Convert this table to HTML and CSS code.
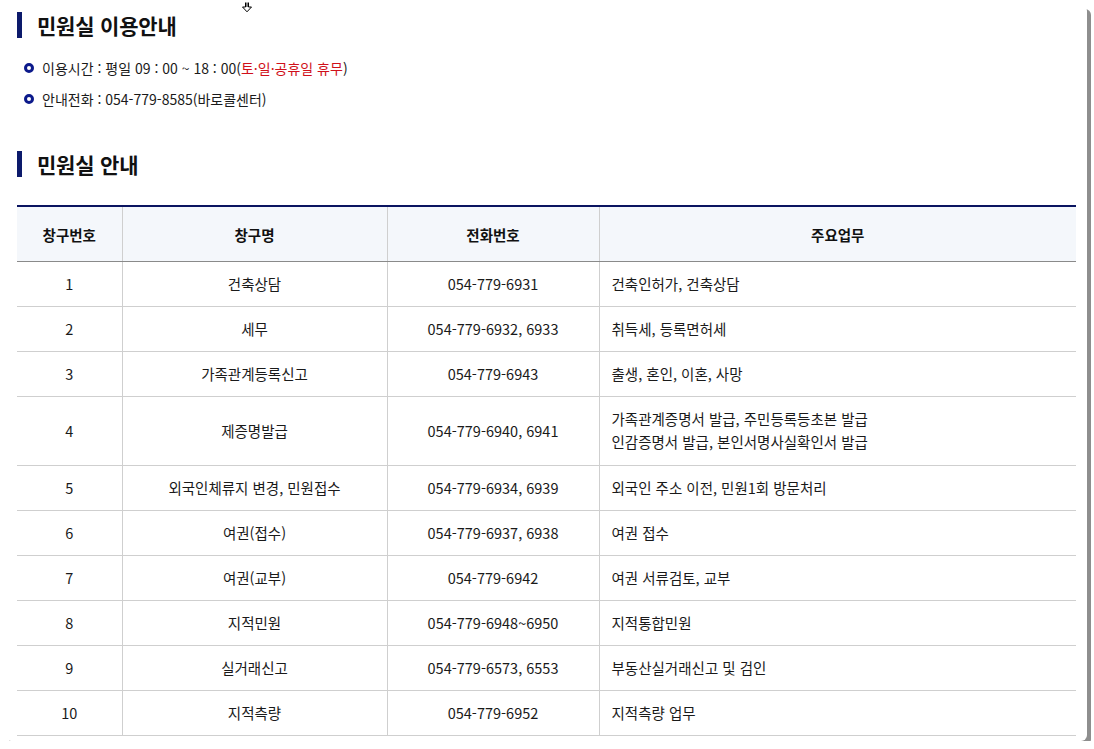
FILE: index.html
```html
<!DOCTYPE html>
<html lang="ko">
<head>
<meta charset="utf-8">
<title>민원실 안내</title>
<link rel="stylesheet" href="styles.css">
</head>
<body>
<div class="frame">
  <svg class="cursor" width="12" height="11" viewBox="0 0 12 11"><path d="M4.5 0.5 V5 H1.5 L6 9.8 L10.5 5 H7.5 V0.5 M6 0.5 V5" fill="#fff" stroke="#000" stroke-width="1"/></svg>
  <h2 class="title">민원실 이용안내</h2>
  <ul class="info">
    <li>이용시간 : 평일 09 : 00 ~ 18 : 00(<span class="red">토·일·공휴일 휴무</span>)</li>
    <li>안내전화 : 054-779-8585(바로콜센터)</li>
  </ul>
  <h2 class="title second">민원실 안내</h2>
  <table class="tbl">
    <colgroup>
      <col class="c1"><col class="c2"><col class="c3"><col class="c4">
    </colgroup>
    <thead>
      <tr><th>창구번호</th><th>창구명</th><th>전화번호</th><th>주요업무</th></tr>
    </thead>
    <tbody>
      <tr><td>1</td><td>건축상담</td><td>054-779-6931</td><td class="l">건축인허가, 건축상담</td></tr>
      <tr><td>2</td><td>세무</td><td>054-779-6932, 6933</td><td class="l">취득세, 등록면허세</td></tr>
      <tr><td>3</td><td>가족관계등록신고</td><td>054-779-6943</td><td class="l">출생, 혼인, 이혼, 사망</td></tr>
      <tr class="multi"><td>4</td><td>제증명발급</td><td>054-779-6940, 6941</td><td class="l">가족관계증명서 발급, 주민등록등초본 발급<br>인감증명서 발급, 본인서명사실확인서 발급</td></tr>
      <tr><td>5</td><td>외국인체류지 변경, 민원접수</td><td>054-779-6934, 6939</td><td class="l">외국인 주소 이전, 민원1회 방문처리</td></tr>
      <tr><td>6</td><td>여권(접수)</td><td>054-779-6937, 6938</td><td class="l">여권 접수</td></tr>
      <tr><td>7</td><td>여권(교부)</td><td>054-779-6942</td><td class="l">여권 서류검토, 교부</td></tr>
      <tr><td>8</td><td>지적민원</td><td>054-779-6948~6950</td><td class="l">지적통합민원</td></tr>
      <tr><td>9</td><td>실거래신고</td><td>054-779-6573, 6553</td><td class="l">부동산실거래신고 및 검인</td></tr>
      <tr><td>10</td><td>지적측량</td><td>054-779-6952</td><td class="l">지적측량 업무</td></tr>
    </tbody>
  </table>
</div>
</body>
</html>
```

FILE: styles.css
```css
html, body {
  margin: 0;
  padding: 0;
  background: #fff;
}
body {
  font-family: "Noto Sans CJK KR", "Noto Sans", sans-serif;
  color: #1a1a1a;
  font-size: 14px;
}
.frame {
  position: relative;
  margin: 5px 0 0 5px;
  width: 1082px;
  height: 736px;
  box-sizing: border-box;
  padding: 7px 11px 0 12px;
  background: #fff;
  border-radius: 0 6px 6px 6px;
  box-shadow: 4px 4px 0 #8e8e8e;
}
.cursor {
  position: absolute;
  left: 236px;
  top: -3px;
}
.title {
  margin: 0;
  display: flex;
  align-items: center;
  height: 26px;
  font-size: 21px;
  font-weight: 700;
  color: #111;
  letter-spacing: -0.2px;
}
.title::before {
  content: "";
  width: 5px;
  height: 26px;
  background: #0c1a6b;
  margin-right: 15px;
}
.info {
  list-style: none;
  margin: 14px 0 36px;
  padding: 0;
}
.info li {
  display: flex;
  align-items: center;
  height: 32px;
  line-height: 20px;
}
.info li:first-child {
  height: 31px;
}
.info li::before {
  content: "";
  width: 4px;
  height: 4px;
  border: 3px solid #0c1a8b;
  border-radius: 50%;
  margin: 0 8px 0 7px;
  flex: none;
}
.red {
  color: #d0101a;
}
.tbl {
  margin-top: 28px;
  width: 1059px;
  border-collapse: collapse;
  table-layout: fixed;
  border-top: 2px solid #0a1460;
  font-size: 14.5px;
}
.c1 { width: 105px; }
.c2 { width: 265px; }
.c3 { width: 212px; }
.c4 { width: 477px; }
.tbl th {
  height: 54px;
  padding: 0;
  background: #f4f7fb;
  font-weight: 700;
  color: #111;
  border-bottom: 1px solid #8a8a8a;
  border-left: 1px solid #cfcfcf;
  text-align: center;
}
.tbl td {
  padding: 10px 12px 11px;
  line-height: 23px;
  text-align: center;
  border-bottom: 1px solid #cfcfcf;
  border-left: 1px solid #cfcfcf;
}
.tbl tr.multi td {
  padding-bottom: 12px;
}
.tbl th:first-child, .tbl td:first-child {
  border-left: none;
}
.tbl td.l {
  text-align: left;
}
```
